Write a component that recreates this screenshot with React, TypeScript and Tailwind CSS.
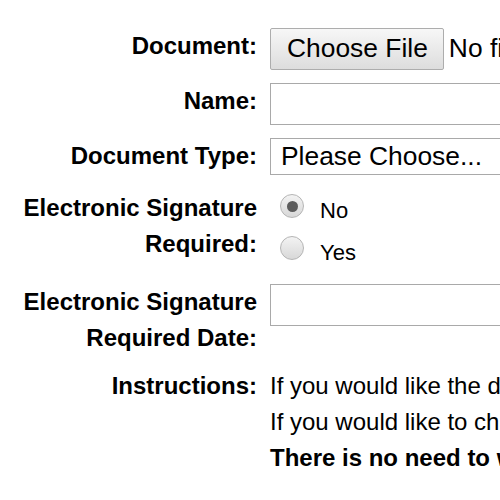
import { useState } from "react";

const font = "font-[family-name:'Liberation_Sans',Arial,sans-serif]";

function Label({ lines }: { lines: string[] }) {
  return (
    <div className="w-[257px] shrink-0 text-right text-[24px] leading-[36px] font-bold text-black">
      {lines.map((l) => (
        <div key={l}>{l}</div>
      ))}
    </div>
  );
}

function Radio({ checked, label, onClick }: { checked: boolean; label: string; onClick: () => void }) {
  return (
    <div className="flex items-start h-[42px] cursor-pointer" onClick={onClick}>
      <div className="mt-1 ml-[10px] w-6 h-6 rounded-full border border-[#b5b5b5] bg-gradient-to-b from-[#f3f3f3] to-[#d8d8d8] flex items-center justify-center">
        {checked && <div className="w-[11px] h-[11px] rounded-full bg-[#5c5c5c]" />}
      </div>
      <span className="ml-4 text-[22px] leading-[42px] text-black">{label}</span>
    </div>
  );
}

export default function App() {
  const [sig, setSig] = useState("no");

  return (
    <div className={`${font} w-[500px] h-[500px] overflow-hidden bg-white text-black`}>
      <div className="pt-[28px] flex flex-col">
        <div className="flex gap-[13px]">
          <Label lines={["Document:"]} />
          <div className="flex items-center whitespace-nowrap">
            <div className="h-[42px] pl-[16px] pr-[15px] flex items-center border border-[#adadad] rounded-[2px] bg-gradient-to-b from-[#f7f7f7] to-[#dddddd] text-[26.4px]">
              Choose File
            </div>
            <span className="ml-[5px] text-[26.4px]">No file chosen</span>
          </div>
        </div>

        <div className="flex gap-[13px] mt-[13px]">
          <Label lines={["Name:"]} />
          <input className="h-[42px] w-[400px] shrink-0 border border-[#a9a9a9] px-2 text-[26.4px] outline-none" />
        </div>

        <div className="flex gap-[13px] mt-[13px]">
          <Label lines={["Document Type:"]} />
          <div className="h-[37px] w-[400px] shrink-0 border border-[#a9a9a9] pl-[10px] flex items-center text-[26.4px] whitespace-nowrap">
            Please Choose...
          </div>
        </div>

        <div className="flex gap-[13px] mt-[15px]">
          <Label lines={["Electronic Signature", "Required:"]} />
          <div className="flex flex-col">
            <Radio checked={sig === "no"} label="No" onClick={() => setSig("no")} />
            <Radio checked={sig === "yes"} label="Yes" onClick={() => setSig("yes")} />
          </div>
        </div>

        <div className="flex gap-[13px] mt-[10px]">
          <Label lines={["Electronic Signature", "Required Date:"]} />
          <input className="h-[42px] w-[400px] shrink-0 border border-[#a9a9a9] px-2 text-[26.4px] outline-none" />
        </div>

        <div className="flex gap-[13px] mt-[12px]">
          <Label lines={["Instructions:"]} />
          <div className="text-[24px] leading-[36px] whitespace-nowrap">
            <div>If you would like the document to be signed electronically</div>
            <div>If you would like to change the signature date</div>
            <div className="font-bold">There is no need to wait for approval</div>
          </div>
        </div>
      </div>
    </div>
  );
}
